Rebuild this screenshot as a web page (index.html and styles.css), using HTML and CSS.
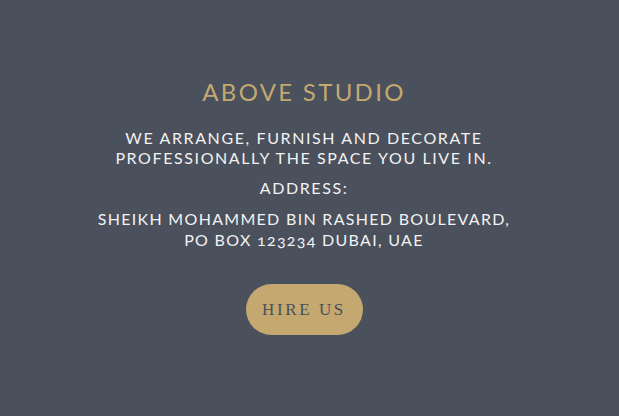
FILE: index.html
```html
<!DOCTYPE html>
<html>
<head>
<meta charset="utf-8">
<link rel="stylesheet" href="styles.css">
</head>
<body>
<main class="hero">
  <h1 class="title">ABOVE STUDIO</h1>
  <p class="text">WE ARRANGE, FURNISH AND DECORATE<br>PROFESSIONALLY THE SPACE YOU LIVE IN.</p>
  <p class="text">ADDRESS:</p>
  <p class="text last">SHEIKH MOHAMMED BIN RASHED BOULEVARD,<br>PO BOX <span class="num">123234</span> DUBAI, UAE</p>
  <a class="btn" href="#">HIRE US</a>
</main>
</body>
</html>
```
FILE: styles.css
```css
html, body {
  margin: 0;
  padding: 0;
  background: #4a505c;
  height: 100%;
}
.hero {
  display: flex;
  flex-direction: column;
  align-items: center;
  text-align: center;
  padding: 76px 11px 0 0;
  font-family: "Lato", "Open Sans", sans-serif;
}
.title {
  margin: 0 0 20px;
  font-weight: 400;
  font-size: 24px;
  line-height: 32px;
  letter-spacing: 2.3px;
  color: #c4a870;
}
.text {
  margin: 0 0 10px;
  color: #f2f2f2;
  font-size: 16px;
  line-height: 20px;
  font-weight: 400;
  letter-spacing: 1.6px;
}
.text.last {
  line-height: 21px;
  letter-spacing: 1.3px;
}
.num {
  font-variant-numeric: oldstyle-nums;
}
.btn {
  margin-top: 24px;
  display: flex;
  align-items: center;
  justify-content: center;
  width: 117px;
  height: 51px;
  border-radius: 26px;
  background: #c4a870;
  color: #4a505c;
  text-decoration: none;
  font-family: "Liberation Serif", serif;
  font-size: 17px;
  letter-spacing: 2.6px;
}
```
